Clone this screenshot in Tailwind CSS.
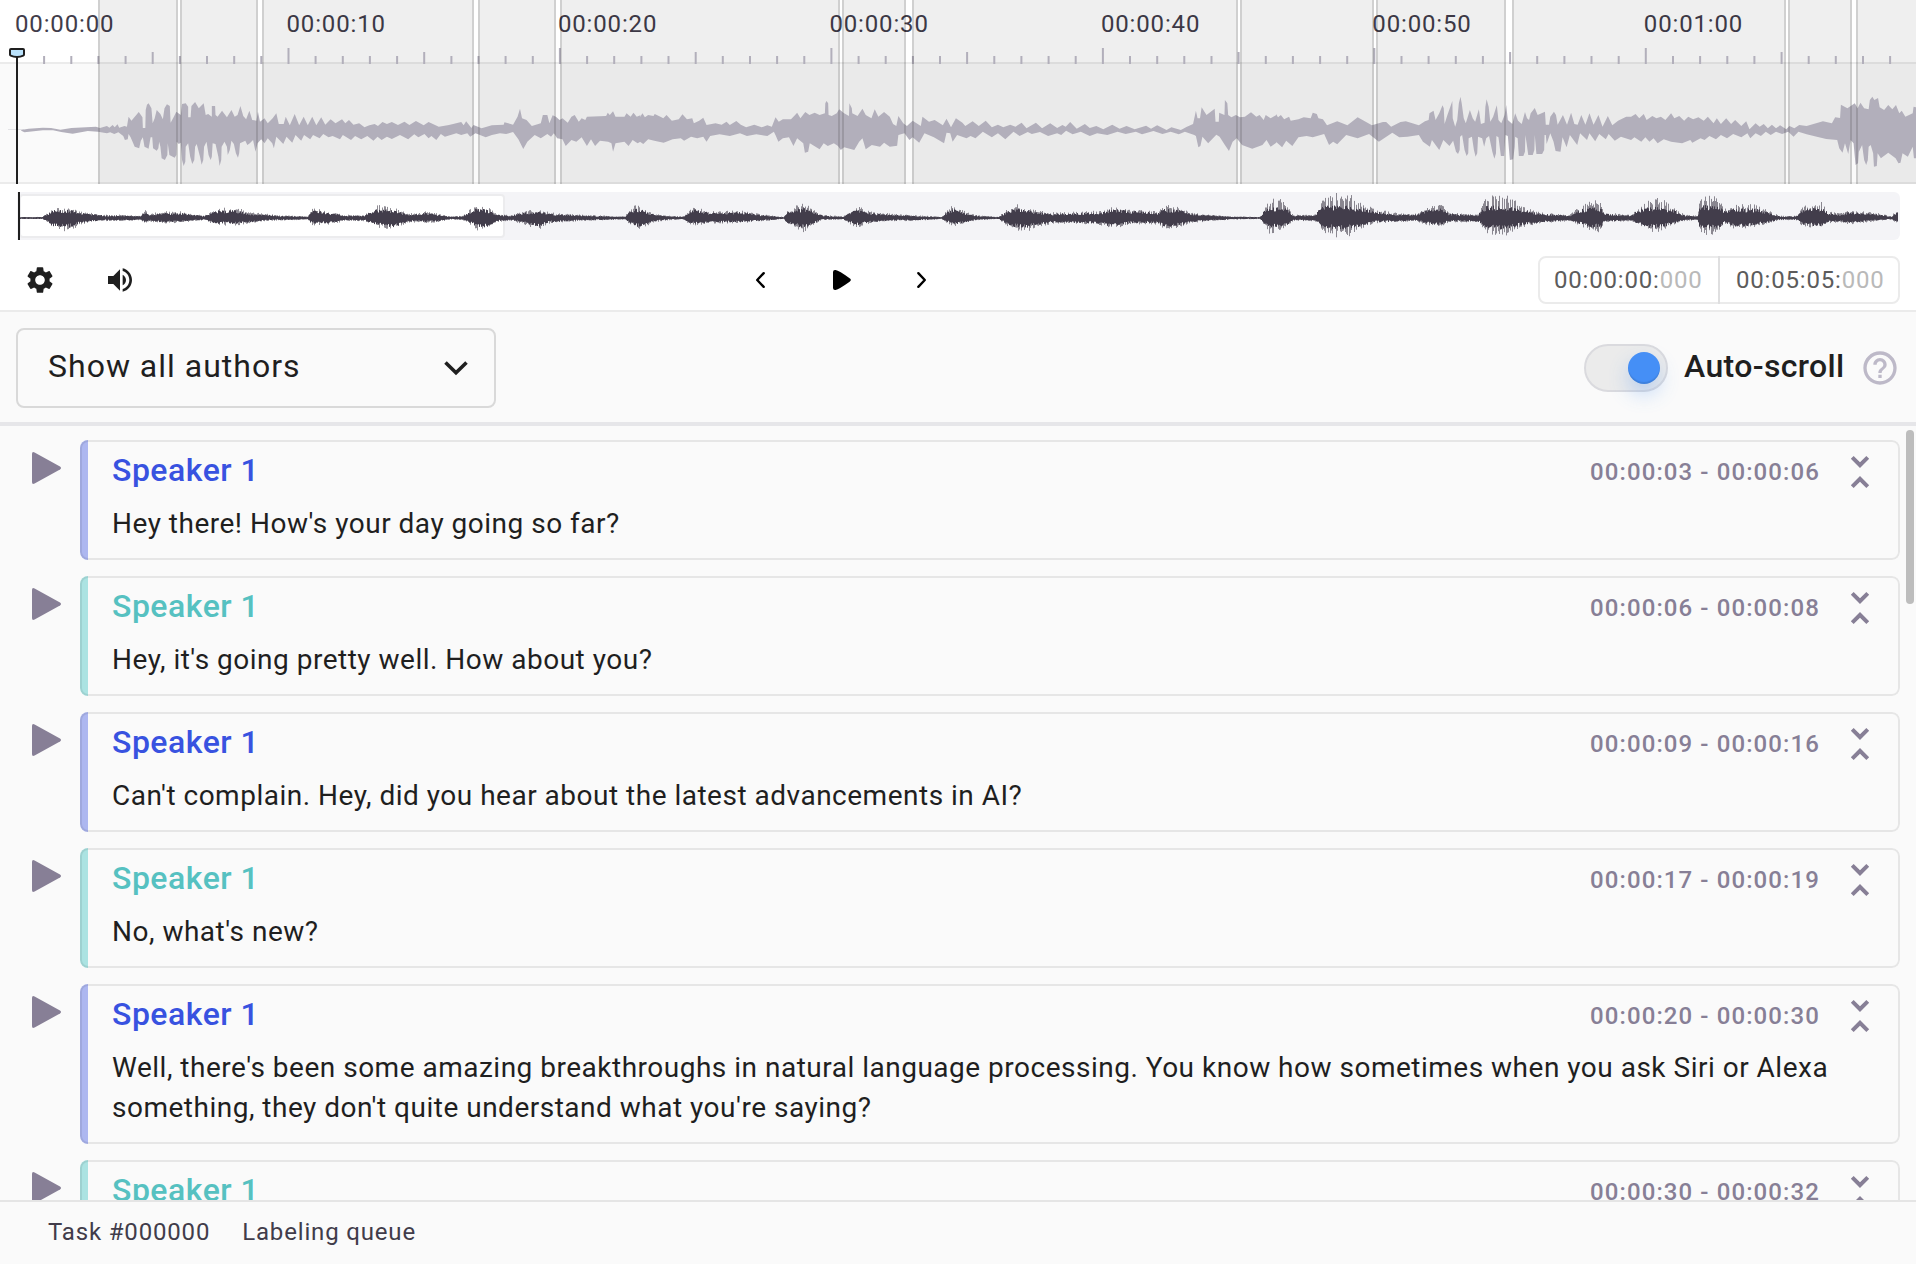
<!DOCTYPE html>
<html lang="en">
<head>
<meta charset="utf-8">
<title>Audio transcription</title>
<script src="https://cdn.jsdelivr.net/npm/@tailwindcss/browser@4"></script>
</head>
<body class="flex h-[1264px] w-[1916px] flex-col overflow-hidden bg-[#fafafa] font-[Roboto,sans-serif] text-[#1f1f1f]">

<!-- Timeline -->
<section class="relative h-[184px] shrink-0 overflow-hidden">
  <div class="h-[62px] bg-white pt-2">
    <div id="labels" class="flex w-[2200px] pl-[15px] text-2xl tracking-[0.85px] text-[#413c4a]"></div>
  </div>
  <div class="h-[122px] border-y-2 border-[#ebebeb] bg-[#fafafa]"></div>
  <svg class="absolute inset-0" width="1916" height="184">
    <path d="M8 129.5H24" stroke="#e3e3e6"/>
    <g id="regions"></g>
    <g id="wave" fill="#b2afbb"></g>
    <path id="ticks" stroke="#b2afbb" stroke-width="2"/>
    <g id="edges"></g>
    <path d="M17 57V184" stroke="#1f1f1f" stroke-width="2"/>
    <path d="M11 49h12q1 0 1 1v4.500q0 .8-.8 1.200Q20.500 57 17 57t-6.200-1.300q-.8-.4-.8-1.200V50q0-1 1-1z" fill="#bae2fb" stroke="#1f1f1f" stroke-width="2"/>
  </svg>
</section>

<!-- Overview and playback controls -->
<section class="h-[128px] shrink-0 border-b-2 border-[#ebebeb] bg-white pt-2">
  <div class="relative ml-[17px] h-12 w-[1883px] rounded-r-md bg-[#f4f4f7]">
    <div class="absolute top-0.5 left-0.5 h-11 w-[486px] rounded border-2 border-[#ececee] bg-white"></div>
    <svg class="absolute inset-0" width="1883" height="48" viewBox="17 192 1883 48">
      <path id="spikes" stroke="#423d4b" stroke-opacity=".6"/>
      <path id="body" stroke="#423d4b"/>
      <path d="M19 192V240" stroke="#1f1f1f" stroke-width="2"/>
    </svg>
  </div>
  <div class="flex items-center pt-4 pr-4 pl-6">
    <div class="flex w-[721px] gap-12">
      <svg class="size-8" viewBox="0 0 24 24" fill="#1f1f1f"><path d="M19.14 12.94c.04-.3.06-.61.06-.94 0-.32-.02-.64-.07-.94l2.03-1.58c.18-.14.23-.41.12-.61l-1.92-3.32c-.12-.22-.37-.29-.59-.22l-2.39.96c-.5-.38-1.030-.7-1.62-.94l-.36-2.54c-.04-.24-.24-.41-.48-.41h-3.84c-.24 0-.43.17-.47.41l-.36 2.54c-.59.24-1.130.57-1.62.94l-2.39-.96c-.22-.08-.47 0-.59.22L2.740 8.870c-.12.21-.08.47.12.61l2.030 1.580c-.05.3-.09.63-.09.94s.02.64.07.94l-2.030 1.580c-.18.14-.23.41-.12.61l1.920 3.320c.12.22.37.29.59.22l2.390-.96c.5.38 1.030.7 1.620.94l.36 2.540c.05.24.24.41.48.41h3.840c.24 0 .44-.17.47-.41l.36-2.540c.59-.24 1.130-.56 1.620-.94l2.390.96c.22.08.47 0 .59-.22l1.920-3.320c.12-.22.07-.47-.12-.61l-2.010-1.580zM12 15.600c-1.980 0-3.600-1.620-3.600-3.600s1.620-3.600 3.600-3.600 3.600 1.620 3.600 3.600-1.620 3.600-3.600 3.600z"/></svg>
      <svg class="size-8" viewBox="0 0 24 24" fill="#1f1f1f"><path d="M3 9v6h4l5 5V4L7 9H3zm13.500 3c0-1.770-1.020-3.290-2.500-4.030v8.050c1.480-.73 2.500-2.250 2.500-4.020zM14 3.230v2.060c2.890.86 5 3.540 5 6.710s-2.110 5.850-5 6.710v2.060c4.010-.91 7-4.490 7-8.770s-2.990-7.860-7-8.770z"/></svg>
    </div>
    <div class="flex flex-1 gap-12">
      <svg class="size-8" viewBox="0 0 32 32" fill="none" stroke="#000" stroke-width="2.400" stroke-linecap="round" stroke-linejoin="round"><path d="M18.700 9.200L12.200 16l6.500 6.800"/></svg>
      <svg class="size-8" viewBox="0 0 32 32"><path d="M8 8q.1-2.300 2.600-1.900 3.400.6 14 8.200 2.500 1.700 0 3.400-10.600 7.600-14 8.200Q8.100 26.300 8 24z"/></svg>
      <svg class="size-8" viewBox="0 0 32 32" fill="none" stroke="#000" stroke-width="2.400" stroke-linecap="round" stroke-linejoin="round"><path d="M13.300 9.200L19.800 16l-6.500 6.800"/></svg>
    </div>
    <div class="flex h-12 w-[362px] items-center rounded-lg border-2 border-[#ebebeb] text-2xl tracking-[0.820px] text-[#5c5c5c]">
      <div class="-my-0.5 flex h-12 w-[180px] items-center border-r-2 border-[#dfdfe0] pl-3.5">00:00:00:<span class="text-[#b9b9b9]">000</span></div>
      <div class="pl-4">00:05:05:<span class="text-[#b9b9b9]">000</span></div>
    </div>
  </div>
</section>

<!-- Filter bar -->
<section class="flex h-[114px] shrink-0 items-start justify-between border-b-4 border-[#e6e6e9] pt-4 pr-4 pl-4">
  <div class="flex h-20 w-[480px] items-center justify-between rounded-lg border-2 border-[#d9d9d9] pr-[22px] pl-[30px] text-[32px] tracking-[1px]">
    <span class="-mt-1">Show all authors</span>
    <svg width="32" height="32" viewBox="0 0 32 32" fill="none" stroke="#1f1f1f" stroke-width="3.600"><path d="M5.500 10.500L16 20.700l10.500-10.200"/></svg>
  </div>
  <div class="flex h-20 items-center">
    <div class="flex h-12 w-[84px] items-center justify-end rounded-full border-2 border-[#dadade] bg-[#ebebeb] pr-1.5">
      <div class="size-8 rounded-full bg-[#458ff6] shadow-[0_10px_20px_rgba(69,143,246,0.300),inset_0_-2px_1px_rgba(0,0,0,0.100)]"></div>
    </div>
    <span class="-mt-1 ml-4 w-[176px] text-[32px] font-medium tracking-[0.350px]">Auto-scroll</span>
    <svg class="size-10" viewBox="0 0 24 24" fill="#bdb9c8"><path d="M11 18h2v-2h-2v2zm1-16C6.480 2 2 6.480 2 12s4.480 10 10 10 10-4.480 10-10S17.520 2 12 2zm0 18c-4.410 0-8-3.590-8-8s3.590-8 8-8 8 3.590 8 8-3.590 8-8 8zm0-14c-2.210 0-4 1.790-4 4h2c0-1.100.9-2 2-2s2 .9 2 2c0 2-3 1.750-3 5h2c0-2.250 3-2.500 3-5 0-2.210-1.790-4-4-4z"/></svg>
  </div>
</section>

<!-- Transcript -->
<main class="relative min-h-0 flex-1 overflow-hidden">
  <div id="list" class="flex flex-col gap-4 pt-3.5 pr-4 pl-8"></div>
  <div class="absolute top-1 right-0.5 h-[174px] w-2 rounded-full bg-[#bdbdbd]"></div>
</main>

<!-- Status bar -->
<footer class="flex h-16 shrink-0 gap-8 border-t-2 border-[#e5e5e5] pt-3.5 pl-12 text-2xl tracking-[0.830px] text-[#413c4a]">
  <span>Task #000000</span><span>Labeling queue</span>
</footer>

<script>
const rows = [
  ['00:00:03 - 00:00:06', "Hey there! How's your day going so far?"],
  ['00:00:06 - 00:00:08', "Hey, it's going pretty well. How about you?"],
  ['00:00:09 - 00:00:16', "Can't complain. Hey, did you hear about the latest advancements in AI?"],
  ['00:00:17 - 00:00:19', "No, what's new?"],
  ['00:00:20 - 00:00:30', "Well, there's been some amazing breakthroughs in natural language processing. You know how sometimes when you ask Siri or Alexa something, they don't quite understand what you're saying?"],
  ['00:00:30 - 00:00:32', ""]
];
document.getElementById('list').innerHTML = rows.map(([time, text], i) => `
  <div class="flex shrink-0 items-start">
    <svg class="mt-3 mr-[18px] shrink-0" width="30" height="32" viewBox="0 0 30 32" fill="#877f96"><path d="M0 2Q0-.8 2.600.5L28 14.500q2 1.500 0 3L2.600 31.500Q0 32.800 0 30z"/></svg>
    <div class="relative min-h-[120px] flex-1 overflow-hidden rounded-lg">
      <div class="absolute inset-y-0 left-0 w-2 ${i % 2 ? 'bg-[#abe3e2]' : 'bg-[#adb7f0]'}"></div>
      <div class="absolute inset-0 rounded-lg border-2 border-black/8"></div>
      <div class="flex items-start pt-2.5 pr-4 pl-8">
        <span class="flex-1 text-[32px] leading-10 font-medium tracking-[0.500px] ${i % 2 ? 'text-[#56c1c1]' : 'text-[#3852e0]'}">Speaker 1</span>
        <span class="pt-1 text-2xl leading-9 font-medium tracking-[1.100px] text-[#877f96]">${time}</span>
        <svg class="-mt-0.5 ml-4 size-12" viewBox="0 0 24 24" fill="#877f96"><path d="M7.410 18.590L8.830 20 12 16.830 15.170 20l1.410-1.410L12 14l-4.590 4.590zm9.180-13.180L15.170 4 12 7.170 8.830 4 7.410 5.410 12 10l4.590-4.590z"/></svg>
      </div>
      <p class="-mt-1 pt-3 pr-14 pb-4 pl-8 text-[28px] leading-10 tracking-[0.500px]">${text}</p>
    </div>
  </div>`).join('');

document.getElementById('labels').innerHTML = ['00:00:00','00:00:10','00:00:20','00:00:30','00:00:40','00:00:50','00:01:00']
  .map(t => `<span class="w-[271.470px] shrink-0">${t}</span>`).join('');

let ticks = '';
for (let s = 1; s < 70; s++) {
  const x = (17 + s * 27.147).toFixed(1);
  ticks += `M${x} ${s % 10 === 0 ? 48 : s % 5 === 0 ? 52 : 56}V64`;
}
document.getElementById('ticks').setAttribute('d', ticks);

const regions = [[98,178],[180,258],[262,474],[478,556],[560,840],[842,906],[912,1238],[1240,1374],[1376,1506],[1512,1786],[1788,1852],[1856,1930]];
document.getElementById('regions').innerHTML = regions
  .map(([a, b]) => `<rect x="${a}" y="0" width="${b - a}" height="184" fill="#000" fill-opacity=".063"/>`).join('');
document.getElementById('edges').innerHTML = regions
  .map(([a, b]) => `<path d="M${a + 1} 0V184M${b - 1} 0V184" stroke="#000" stroke-opacity=".13" stroke-width="2"/>`).join('');

const chunks = [
 [0,
 '52,390 70,386 105,383 125,384 148,389 175,384 235,380 245,384 262,378 268,383 276,375 281,382 288,373 292,383 305,378 311,380 315,350 322,362 340,336 349,352 350,384 356,384 357,330 360,314 364,310 371,325 374,370 379,355 384,330 393,342 399,358 403,325 409,313 416,318 418,368 426,350 432,335 443,345 446,312 455,310 461,320 461,352 467,352 469,318 478,306 487,325 499,310 504,345 510,342 519,350 519,318 527,318 528,345 533,350 544,332 556,352 567,330 575,350 582,345 589,318 596,348 603,358 611,332 618,360 628,362 632,335 637,365 648,355 656,370 668,355 677,340 683,372 695,372 700,350 710,376 722,342 733,376 744,350 754,376 765,350 775,376 787,352 797,374 810,358 822,370 838,358 846,370 855,360 866,374 880,370 893,382 905,376 918,372 926,378 937,366 948,372 960,366 975,375 991,365 1003,375 1019,363 1038,376 1050,366 1075,380 1100,375 1130,366 1136,376 1142,364 1155,384 1160,375 1180,385 1205,376 1234,374 1236,367 1257,374 1268,350 1274,326 1279,355 1290,360 1303,378 1325,370 1330,345 1341,345 1346,370 1354,346 1362,350 1371,360 1378,355 1391,368 1400,350 1408,345 1418,365 1425,355 1434,360 1438,350 1485,348 1489,338 1494,345 1502,334 1508,350 1530,350 1535,340 1545,350 1552,338 1560,350 1569,346',
 '52,392 60,397 105,391 130,391 150,396 178,401 215,393 240,395 262,400 270,397 280,402 290,397 302,408 306,420 313,418 315,402 320,412 330,440 341,445 345,422 350,412 354,440 364,446 369,412 373,412 375,445 384,452 388,445 390,425 393,440 396,475 404,480 410,465 411,430 415,465 428,473 432,465 433,425 438,432 443,428 446,480 450,498 454,485 455,440 461,430 466,470 471,492 476,480 478,440 482,432 490,470 494,494 498,480 500,440 506,425 511,465 516,480 519,470 521,430 528,432 535,470 538,498 542,480 543,440 550,425 556,440 558,465 563,450 567,422 573,432 578,460 583,473 586,460 588,430 601,422 606,435 612,430 620,420 626,455 631,430 640,418 648,430 656,415 667,430 671,445 677,410 694,432 702,410 716,428 724,405 738,422 745,405 760,418 767,405 783,415 792,402 805,412 815,408 833,418 840,405 860,420 870,408 885,418 900,408 915,422 925,410 935,420 948,410 960,417 980,405 1000,418 1015,403 1025,412 1040,402 1050,415 1057,408 1069,420 1080,402 1090,410 1118,400 1130,405 1145,400 1152,410 1165,400 1190,412 1205,405 1225,400 1240,402 1257,396 1270,418 1282,447 1292,425 1310,405 1325,415 1341,402 1350,410 1357,400 1365,415 1378,418 1386,438 1400,420 1412,425 1425,412 1438,438 1448,418 1458,438 1470,422 1490,425 1498,430 1502,455 1508,430 1530,425 1540,438 1550,420 1562,430 1569,425'],
 [640,
 '0,352 6,340 12,352 20,345 33,348 36,342 50,350 57,355 65,345 78,362 95,358 104,343 115,358 128,355 132,370 145,362 155,353 163,375 185,370 200,374 212,365 220,375 236,363 247,374 260,382 280,374 298,382 312,376 323,380 332,352 340,365 350,358 370,358 380,345 385,338 393,355 405,336 415,345 428,338 440,345 453,340 454,310 457,303 461,310 462,345 470,348 482,340 488,328 500,340 512,348 513,310 519,325 520,340 533,348 545,326 553,345 567,355 575,328 584,350 598,336 612,350 620,372 628,378 633,348 645,370 654,378 668,362 688,378 692,350 708,365 722,360 742,376 751,356 762,382 774,355 790,368 797,378 815,364 830,378 847,362 862,382 877,374 890,382 907,374 920,380 935,368 947,385 970,368 985,385 1005,370 1022,384 1035,375 1043,380 1054,366 1070,386 1090,372 1102,384 1118,378 1135,388 1157,374 1175,386 1192,378 1212,388 1240,377 1252,386 1267,376 1290,390 1302,382 1325,390 1340,380 1355,372 1362,332 1366,355 1372,355 1376,322 1388,345 1408,326 1410,365 1418,365 1419,338 1432,345 1433,300 1439,310 1441,345 1449,352 1460,345 1470,352 1482,350 1497,337 1510,350 1518,345 1528,360 1533,345 1545,355 1559,345',
 '0,425 8,432 20,418 35,422 58,428 80,418 100,415 108,422 125,410 140,415 155,410 163,425 172,408 195,403 220,408 245,400 262,408 285,403 312,408 328,395 333,408 339,425 350,415 365,412 376,438 385,415 400,430 404,458 412,455 416,430 440,448 450,430 460,438 475,430 485,438 492,450 500,442 525,450 537,425 545,415 553,448 568,435 588,440 598,428 612,440 630,437 633,405 648,400 660,420 668,412 684,428 697,400 720,412 745,430 751,398 760,400 766,425 777,405 800,415 810,408 822,415 840,395 862,412 877,400 895,418 915,395 930,408 950,396 960,402 980,396 1000,408 1022,400 1032,405 1044,392 1060,403 1080,395 1102,408 1120,400 1145,405 1170,395 1190,402 1215,395 1230,403 1258,393 1280,402 1300,395 1320,403 1335,395 1358,405 1362,408 1368,442 1373,438 1378,410 1392,430 1412,404 1420,410 1433,435 1443,453 1452,425 1462,415 1475,435 1500,446 1525,435 1535,420 1545,440 1559,428'],
 [1276,
 '0,342 5,352 12,345 20,358 32,350 36,362 55,358 68,352 85,355 90,338 100,342 104,355 115,358 125,376 150,364 175,376 200,352 235,376 262,366 270,366 282,380 305,366 318,364 350,376 365,364 374,360 376,340 386,332 391,360 400,340 408,316 411,325 413,372 420,345 432,303 433,355 439,380 444,360 448,310 452,290 455,310 460,355 465,370 475,330 482,355 488,365 497,328 502,372 511,368 513,320 516,298 521,320 525,365 532,350 541,316 545,360 552,370 560,345 564,315 568,360 579,372 586,340 593,362 602,372 610,336 615,355 620,360 624,340 634,324 641,345 659,335 661,374 669,374 672,350 681,335 686,345 690,374 703,345 713,374 723,338 731,372 739,374 748,345 758,374 768,340 778,374 790,345 800,380 813,348 824,376 838,362 858,350 870,350 881,342 890,355 901,342 908,360 922,348 932,355 943,350 954,360 968,340 976,355 988,348 1000,362 1010,350 1022,358 1035,352 1048,362 1058,350 1072,370 1080,355 1090,372 1103,355 1115,372 1125,360 1140,378 1152,364 1160,388 1175,370 1185,380 1195,372 1205,385 1215,374 1225,385 1235,376 1250,388 1258,378 1270,385 1282,375 1300,378 1340,364 1362,370 1370,352 1382,354 1384,314 1400,325 1418,310 1425,325 1432,308 1441,325 1452,328 1455,300 1461,290 1466,300 1475,294 1479,322 1490,330 1500,315 1510,328 1519,315 1527,340 1533,332 1542,350 1560,340 1562,320 1568,322',
 '0,425 15,442 25,422 40,438 55,412 75,408 90,412 118,402 130,435 140,425 150,433 172,405 200,415 228,402 252,425 285,398 302,412 322,410 350,405 360,425 377,440 382,420 400,450 410,420 425,438 434,422 441,455 446,462 450,450 451,410 456,405 462,450 467,468 471,460 472,415 480,410 485,450 489,470 493,460 495,410 505,415 510,440 515,415 522,408 530,455 535,476 539,460 540,408 545,412 551,468 559,468 562,405 568,408 573,480 581,478 585,440 586,410 592,415 595,468 606,468 610,455 611,405 614,430 618,465 629,465 633,450 634,405 638,462 652,462 657,450 658,405 661,405 663,432 672,400 680,425 685,453 697,455 702,412 712,442 720,405 738,435 745,400 762,420 768,400 782,424 792,402 808,418 815,402 830,422 845,410 870,420 878,412 895,425 905,412 915,425 925,415 935,430 950,418 968,425 995,430 1015,420 1020,428 1040,415 1050,420 1062,408 1078,418 1090,405 1105,415 1120,402 1140,412 1155,400 1162,415 1175,400 1188,408 1200,395 1212,405 1225,395 1240,402 1255,395 1268,410 1280,395 1300,403 1325,410 1348,417 1375,420 1380,445 1388,458 1394,430 1402,462 1408,420 1415,430 1420,495 1426,490 1428,455 1436,435 1441,480 1446,495 1450,480 1452,440 1457,435 1463,460 1465,500 1472,498 1474,460 1482,475 1500,458 1518,475 1525,490 1530,488 1535,460 1548,470 1560,440 1563,475 1568,475']
];
document.getElementById('wave').innerHTML = chunks.map(([off, up, down]) =>
  `<polygon transform="translate(${off}) scale(.40816 .33333)" points="${up} ${down.split(' ').reverse().join(' ')}"/>`).join('');

/* Overview envelope: x, height above the axis, depth below it. */
const env = [[20,.7,.7],[42,1,1],[48,5,4],[52,9,9],[64,10,12],[72,9,12],[78,6,7],[90,5,4],[105,3,3],[125,3,3],[141,2,2],[145,8,5],[149,3,3],[160,6,5],[180,6,5],[192,4,3],[205,2.5,2.5],[211,6,5],[218,9,7],[238,9,7],[250,5,5],[265,4,3],[280,2.500,2.500],[308,1.5,1.5],[312,9,7],[330,6,6],[345,3,3],[365,3,3],[371,8,6],[378,12,9],[395,9,11],[408,4,4],[425,6,5],[438,4,4],[450,1.5,1.5],[463,2,2],[470,8,6],[479,12,13],[489,9,10],[496,4,4],[510,2.5,2.5],[520,6,5],[540,8,11],[550,5,5],[580,3,3],[625,1.500,1.500],[630,8,6],[637,13,11],[645,8,8],[655,4,4],[670,2,2],[683,1.5,1.5],[690,7,6],[695,10,7],[710,6,5],[740,7,5],[765,3,3],[784,1,1],[787,6,6],[795,11,10],[804,14,13],[812,8,7],[823,3,2],[843,1.5,1.500],[850,6,6],[857,11,9],[870,6,5],[890,4,3],[910,3,3],[942,1.2,1.2],[946,6,4],[953,12,8],[962,7,6],[975,3,2.500],[998,1,1],[1005,6,6],[1016,13,12],[1025,11,14],[1035,7,9],[1055,5,5],[1090,6,6],[1104,7,7],[1112,11,11],[1130,8,6],[1148,8,6],[1158,6,6],[1165,12,11],[1183,9,8],[1190,5,5],[1210,3,3],[1235,1.500,1.500],[1260,1,1],[1264,8,7],[1270,16,15],[1280,19,13],[1287,12,9],[1293,3,3],[1315,3,3],[1321,14,10],[1325,23,15],[1335,22,18],[1350,21,17],[1360,14,10],[1375,8,5],[1400,4,4],[1415,4,3],[1425,8,6],[1440,14,9],[1449,5,4],[1478,3,4],[1484,15,10],[1488,22,15],[1502,20,19],[1512,19,13],[1520,11,9],[1540,5,5],[1570,3,3],[1578,9,6],[1588,15,11],[1600,17,14],[1604,5,4],[1632,3,3],[1640,12,8],[1650,17,14],[1662,18,12],[1672,10,7],[1685,3,3],[1698,2,2],[1700,17,13],[1704,23,16],[1718,20,15],[1724,8,5],[1736,13,11],[1755,12,8],[1770,6,5],[1780,2,2],[1796,2,2],[1803,10,8],[1820,16,10],[1828,6,5],[1840,4,4],[1850,7,6],[1875,5,3],[1892,1.500,1.500],[1894,5,4],[1898,7,6]];
let seed = 7, spikes = '', body = '', k = 0;
const rnd = () => (seed = (seed * 16807) % 2147483647) / 2147483647;
for (let x = 20.5; x < 1898; x++) {
  while (x > env[k + 1][0]) k++;
  const [x0, u0, d0] = env[k], [x1, u1, d1] = env[k + 1], t = (x - x0) / (x1 - x0);
  const u = u0 + (u1 - u0) * t, d = d0 + (d1 - d0) * t, a = rnd(), b = rnd();
  const core = v => Math.max(.8, v < 10 ? v * .68 : 6.8 + (v - 10) * .25);
  const tall = rnd() < .6 ? 1 : .3;
  body += `M${x} ${(218 - core(u) * (.75 + a * .55)).toFixed(1)}V${(218 + core(d) * (.75 + b * .55)).toFixed(1)}`;
  spikes += `M${x} ${(218 - u * (.75 + rnd() * .4) * tall).toFixed(1)}V${(218 + d * (.7 + rnd() * .4) * tall).toFixed(1)}`;
}
document.getElementById('spikes').setAttribute('d', spikes);
document.getElementById('body').setAttribute('d', body);
</script>
</body>
</html>
